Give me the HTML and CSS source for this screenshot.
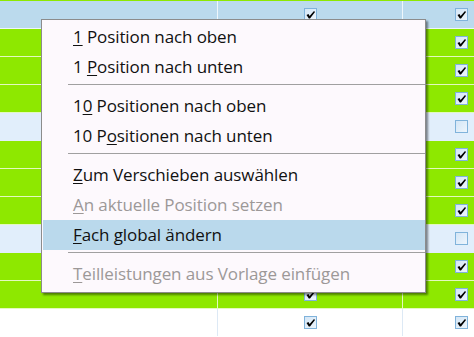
FILE: index.html
```html
<!DOCTYPE html>
<html lang="de">
<head>
<meta charset="utf-8">
<title>Kontextmenü</title>
<link rel="stylesheet" href="styles.css">
</head>
<body>
<div class="grid">
  <div class="strip"></div>
  <div class="row sel"><div class="cell c1"></div><div class="cell c2"><span class="cb on"></span></div><div class="cell c3"><span class="cb on"></span></div></div>
  <div class="row green"><div class="cell c1"></div><div class="cell c2"><span class="cb on"></span></div><div class="cell c3"><span class="cb on"></span></div></div>
  <div class="row green"><div class="cell c1"></div><div class="cell c2"><span class="cb on"></span></div><div class="cell c3"><span class="cb on"></span></div></div>
  <div class="row green"><div class="cell c1"></div><div class="cell c2"><span class="cb on"></span></div><div class="cell c3"><span class="cb on"></span></div></div>
  <div class="row alt"><div class="cell c1"></div><div class="cell c2"><span class="cb"></span></div><div class="cell c3"><span class="cb"></span></div></div>
  <div class="row green"><div class="cell c1"></div><div class="cell c2"><span class="cb on"></span></div><div class="cell c3"><span class="cb on"></span></div></div>
  <div class="row green"><div class="cell c1"></div><div class="cell c2"><span class="cb on"></span></div><div class="cell c3"><span class="cb on"></span></div></div>
  <div class="row green"><div class="cell c1"></div><div class="cell c2"><span class="cb on"></span></div><div class="cell c3"><span class="cb on"></span></div></div>
  <div class="row alt"><div class="cell c1"></div><div class="cell c2"><span class="cb"></span></div><div class="cell c3"><span class="cb"></span></div></div>
  <div class="row green"><div class="cell c1"></div><div class="cell c2"><span class="cb on"></span></div><div class="cell c3"><span class="cb on"></span></div></div>
  <div class="row green"><div class="cell c1"></div><div class="cell c2"><span class="cb on"></span></div><div class="cell c3"><span class="cb on"></span></div></div>
  <div class="row plain"><div class="cell c1"></div><div class="cell c2"><span class="cb on"></span></div><div class="cell c3"><span class="cb on"></span></div></div>
</div>

<div class="menu">
  <div class="item"><u>1</u> Position nach oben</div>
  <div class="item">1 <u>P</u>osition nach unten</div>
  <div class="sep"></div>
  <div class="item">1<u>0</u> Positionen nach oben</div>
  <div class="item">10 P<u>o</u>sitionen nach unten</div>
  <div class="sep"></div>
  <div class="item"><u>Z</u>um Verschieben auswählen</div>
  <div class="item disabled"><u>A</u>n aktuelle Position setzen</div>
  <div class="item hot"><u>F</u>ach global ändern</div>
  <div class="sep"></div>
  <div class="item disabled"><u>T</u>eilleistungen aus Vorlage einfügen</div>
</div>
</body>
</html>
```

FILE: styles.css
```css
html, body {
  margin: 0;
  padding: 0;
  width: 474px;
  height: 337px;
  overflow: hidden;
  background: #ffffff;
  font-family: "Open Sans", "Noto Sans", "DejaVu Sans", sans-serif;
}

.grid {
  display: flex;
  flex-direction: column;
  width: 474px;
  overflow: hidden;
}

.strip {
  height: 1px;
  background: #8ee800;
}

.row {
  display: grid;
  grid-template-columns: 218px 185px 1fr;
  height: 28px;
  box-sizing: border-box;
  border-bottom: 1px solid rgba(255, 255, 255, 0.75);
}

.row.sel { background: #bbdaed; }
.row.green { background: #8ee800; }
.row.alt { background: #e1eefb; border-bottom-color: transparent; }
.row.plain { background: #ffffff; }

.cell {
  display: flex;
  align-items: center;
  justify-content: center;
  border-right: 1px solid rgba(255, 255, 255, 0.75);
}
.row.plain .cell { border-right-color: #dde9f5; }
.row.alt .cell { border-right-color: #ffffff; }

.cell.c3 {
  justify-content: flex-start;
  padding-left: 52px;
  border-right: none;
}

.cb {
  width: 13px;
  height: 13px;
  box-sizing: border-box;
  border: 1px solid #80b3db;
  background: linear-gradient(135deg, #d4e6f6 0%, #edf5fc 100%);
  position: relative;
}

.cb.on::after {
  content: "";
  position: absolute;
  left: 1px;
  top: 1px;
  width: 9px;
  height: 9px;
  background: url("data:image/svg+xml;utf8,<svg xmlns='http://www.w3.org/2000/svg' viewBox='0 0 9 9'><path d='M0.5 5 L2.5 4 L3.6 6 L8 1 L9 2 L4 8.5 L2.8 8.5 Z' fill='black'/></svg>") no-repeat center / contain;
}

.menu {
  position: absolute;
  left: 41px;
  top: 19px;
  width: 385px;
  box-sizing: border-box;
  padding: 2px 0 3px 0;
  background: #fdf9fd;
  border: 1px solid #8c8c8c;
  box-shadow: 2px 2px 2px rgba(0, 0, 0, 0.45);
  display: flex;
  flex-direction: column;
}

.item {
  height: 30px;
  line-height: 30px;
  font-size: 17px;
  letter-spacing: -0.1px;
  color: #111111;
  padding-left: 30px;
  margin-left: 1px;
  white-space: nowrap;
}

.item u {
  text-decoration: underline;
  text-underline-offset: 2px;
  text-decoration-thickness: 1px;
}

.item.disabled {
  color: #9c9898;
}

.item.hot {
  background: #bad9ec;
}

.sep {
  height: 1px;
  margin: 2px 0 6px 26px;
  background: #a0a0a0;
}
```
